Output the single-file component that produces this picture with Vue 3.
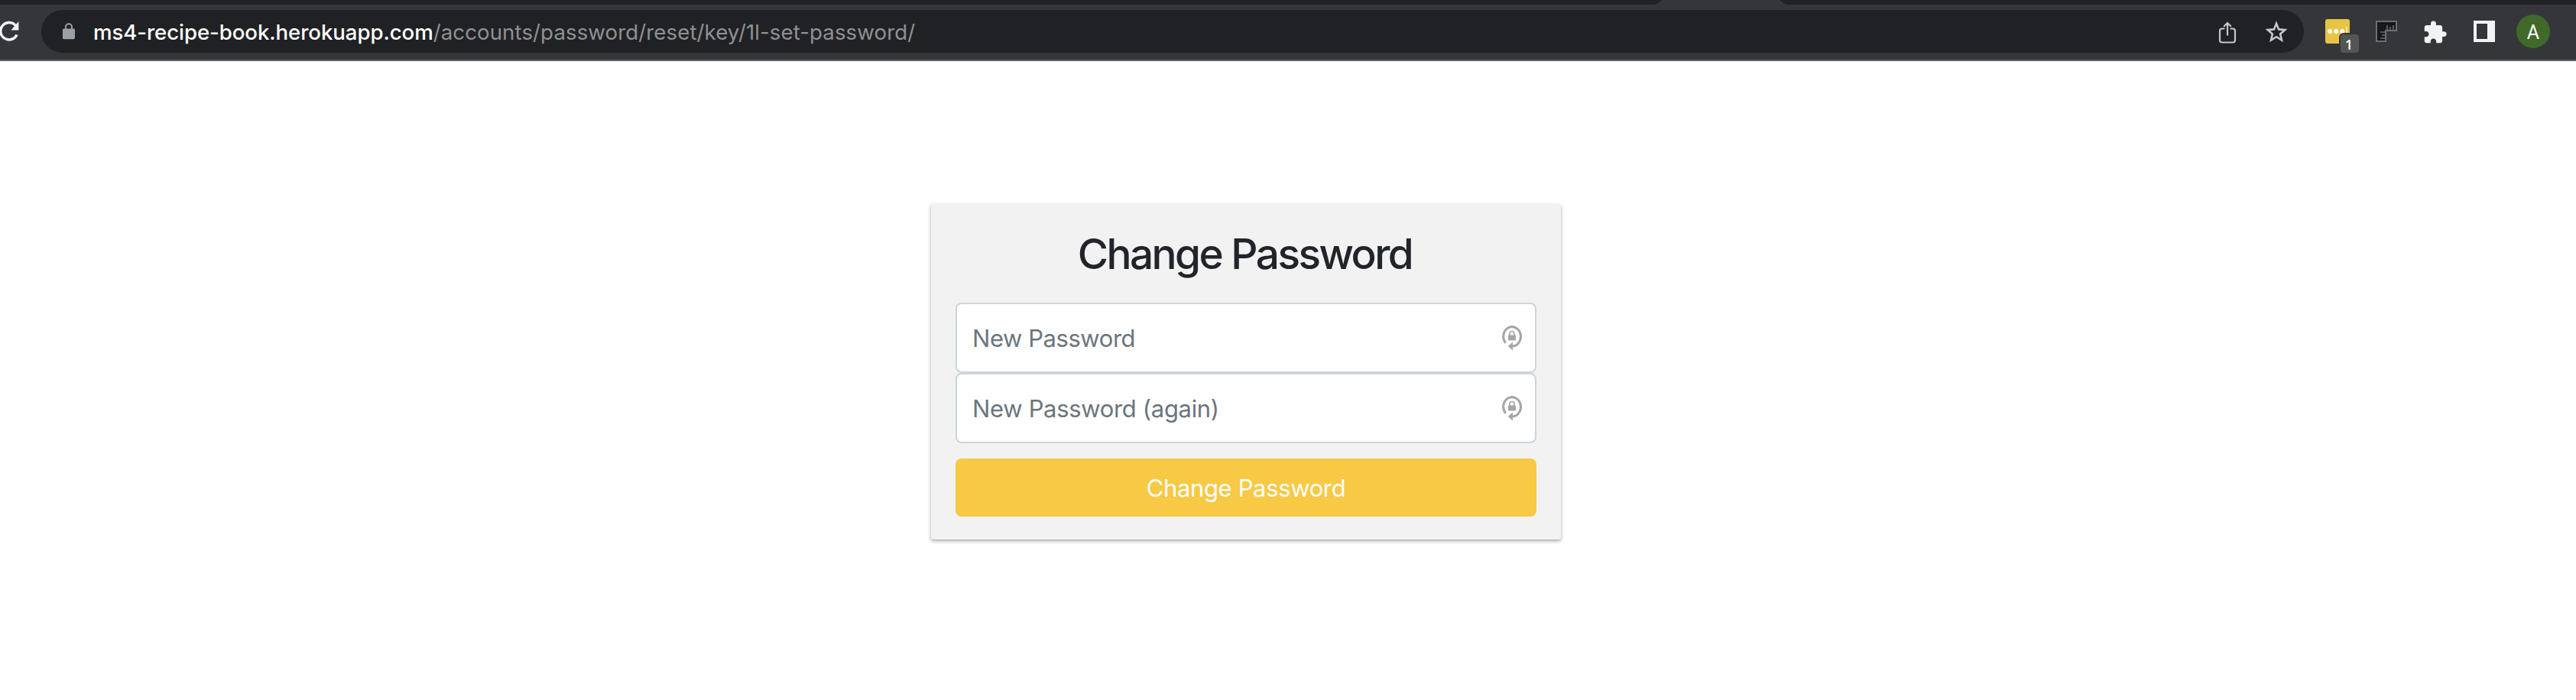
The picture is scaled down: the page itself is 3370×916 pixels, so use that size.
<script setup>
import { ref } from 'vue'

const host = 'ms4-recipe-book.herokuapp.com'
const path = '/accounts/password/reset/key/1l-set-password/'

const fields = ref([
  { id: 'password1', placeholder: 'New Password', value: '' },
  { id: 'password2', placeholder: 'New Password (again)', value: '' },
])
</script>

<template>
  <div class="window">
    <div class="tabstrip">
      <svg width="3370" height="6" viewBox="0 0 3370 6">
        <path d="M2164 6C2168 5 2171 3 2174 0H2328C2331 3 2334 5 2338 6Z" fill="#35363a" />
      </svg>
    </div>
    <header class="toolbar">
      <svg class="reload" width="40" height="40" viewBox="0 0 40 40">
        <path d="M28.7 12.8A11.2 11.2 0 1 0 30 24.5" fill="none" stroke="#f1f3f4" stroke-width="3.4" />
        <path d="M32.4 7V18.5H22.5Z" fill="#f1f3f4" />
      </svg>
      <div class="omnibox">
        <svg class="lock" width="16" height="22" viewBox="0 0 16 22">
          <path d="M4 9V5.2a4 4 0 0 1 8 0V9" fill="none" stroke="#9aa0a6" stroke-width="2" />
          <rect y="7.5" width="16" height="13.7" rx="1.6" fill="#9aa0a6" />
        </svg>
        <div class="url"><span class="host">{{ host }}</span><span class="path">{{ path }}</span></div>
        <svg class="share" width="24" height="34" viewBox="0 -4 24 34">
          <g fill="none" stroke="#c4c5c7" stroke-width="2.2">
            <path d="M8.500 9.500H5A3 3 0 0 0 2 12.500V24.500A3 3 0 0 0 5 27.500H19A3 3 0 0 0 22 24.500V12.500A3 3 0 0 0 19 9.500H15.500" />
            <path d="M12 18.500V2.500M7.200 6.700L12 2L16.800 6.700" />
          </g>
        </svg>
        <svg class="star" width="30" height="32" viewBox="0 -2 30 32">
          <path d="M15 3.800L18.100 11.400L26.300 12.100L20.100 17.500L22 25.500L15 21.200L8 25.500L9.900 17.500L3.700 12.100L11.900 11.400Z" fill="none" stroke="#c4c5c7" stroke-width="2.600" />
        </svg>
      </div>
      <div class="ext">
        <svg width="32" height="32" viewBox="0 0 32 32">
          <rect width="32" height="32" rx="3" fill="#e8c445" />
          <g fill="#fff">
            <circle cx="6.2" cy="16" r="3" />
            <circle cx="14.2" cy="16" r="3" />
            <circle cx="22.2" cy="16" r="3" />
            <rect x="27" y="10" width="1.8" height="12" fill="#f7e8b0" />
          </g>
        </svg>
        <span class="badge">1</span>
      </div>
      <svg class="ruler" width="28" height="28" viewBox="0 0 28 28">
        <path d="M1 1H27V13H13V27H1Z" fill="#17181a" stroke="#6d6e70" stroke-width="2" />
        <path d="M15 12V6M19 12V8M23 12V6M12 15H6M12 19H8M12 23H6" stroke="#6d6e70" stroke-width="1.6" />
      </svg>
      <svg class="puzzle" width="33" height="35" viewBox="0 -1.500 24 25.500">
        <path d="M20.500 11H19V7c0-1.100-.9-2-2-2h-4V3.500a2.500 2.500 0 0 0-5 0V5H4c-1.100 0-2 .9-2 2v3.800h1.500c1.500 0 2.700 1.200 2.700 2.700S5 16.200 3.500 16.200H2V20c0 1.100.9 2 2 2h3.800v-1.500c0-1.500 1.200-2.700 2.700-2.700s2.700 1.200 2.700 2.700V22H17c1.100 0 2-.9 2-2v-4h1.500a2.500 2.500 0 0 0 0-5z" fill="#f1f3f4" />
      </svg>
      <svg class="panel" width="28" height="28" viewBox="0 0 28 28">
        <path d="M0 0H28V28H0ZM4 4V24H18V4Z" fill="#f1f3f4" fill-rule="evenodd" />
      </svg>
      <div class="avatar">A</div>
    </header>

    <main class="page">
      <form class="card" @submit.prevent>
        <h1>Change Password</h1>
        <div v-for="f in fields" :key="f.id" class="field">
          <input v-model="f.value" type="password" :placeholder="f.placeholder" :class="f.id" />
          <svg width="26" height="34" viewBox="0 0 26 34">
            <path d="M4.600 23.800A11.400 12.700 0 1 1 14 28" fill="none" stroke="#a6a6a6" stroke-width="3.100" />
            <path d="M7.800 28L14 22.500V33.500Z" fill="#a6a6a6" />
            <rect x="8" y="13.500" width="10" height="7" rx="1" fill="#a6a6a6" />
            <path d="M10 14V11.500a3 3 0 0 1 6 0V14" fill="none" stroke="#a6a6a6" stroke-width="1.700" />
          </svg>
        </div>
        <button type="submit">Change Password</button>
      </form>
    </main>
  </div>
</template>

<style>
body { background: #fff; }
</style>

<style scoped>
.window {
  width: 3370px;
  height: 916px;
  overflow: hidden;
  background: #fff;
  font-family: Inter, "Open Sans", sans-serif;
}
svg { display: block; flex: none; }
.tabstrip { height: 6px; background: #202124; }
.toolbar {
  display: flex;
  align-items: center;
  box-sizing: border-box;
  height: 74px;
  padding-bottom: 2px;
  border-bottom: 2px solid #5f6063;
  background: #35363a;
}
.reload { margin-left: -8px; }
.omnibox {
  display: flex;
  align-items: center;
  box-sizing: border-box;
  width: 2960px;
  height: 56px;
  margin-left: 22px;
  padding: 0 21px 0 28px;
  border-radius: 28px;
  background: #202124;
}
.url {
  flex: 1;
  margin-left: 24px;
  padding-top: 1px;
  font-size: 27.7px;
  line-height: 36px;
  white-space: nowrap;
}
.host { color: #fff; font-weight: 500; letter-spacing: -0.12px; }
.path { color: #8f9092; letter-spacing: 0.06px; }
.share { margin-right: 37px; }
.ext { position: relative; margin-left: 28px; }
.badge {
  position: absolute;
  left: 20px;
  top: 20px;
  width: 24px;
  height: 24px;
  border-radius: 4px;
  background: #555;
  box-shadow: 0 0 0 2px #35363a;
  color: #fff;
  font: 600 18px/27px "Open Sans", sans-serif;
  text-indent: -2px;
  text-align: center;
}
.ruler { margin-left: 34px; }
.puzzle { margin-left: 33px; }
.panel { margin-left: 34px; }
.avatar {
  width: 44px;
  height: 44px;
  margin-left: 28px;
  border-radius: 50%;
  background: #41692a;
  color: #fff;
  font: 400 25px/47px Roboto, sans-serif;
  text-align: center;
}
.page { display: flex; padding: 187px 0 0 1218px; }
.card {
  box-sizing: border-box;
  width: 824px;
  height: 439px;
  padding: 32px 32px 0;
  border-radius: 2px;
  background: #f2f2f2;
  box-shadow: 0 2px 5px rgba(0, 0, 0, 0.32), 0 1px 1px rgba(0, 0, 0, 0.1);
}
h1 {
  margin: 0 0 30px;
  padding-right: 3px;
  color: #212529;
  font-size: 55px;
  font-weight: 450;
  line-height: 67px;
  letter-spacing: -2.6px;
  text-align: center;
}
.field {
  display: flex;
  align-items: center;
  box-sizing: border-box;
  height: 92px;
  padding: 0 17px 0 20px;
  border: 2px solid #ced4da;
  border-radius: 8px;
  background: #fff;
}
input {
  flex: 1;
  min-width: 0;
  height: 60px;
  padding: 0;
  border: 0;
  outline: 0;
  background: none;
  font-family: inherit;
  font-size: 31px;
  letter-spacing: -0.44px;
}
input.password2 { letter-spacing: -0.33px; }
input::placeholder { color: #6c757d; opacity: 1; }
button {
  display: block;
  width: 100%;
  height: 76px;
  margin-top: 20px;
  padding: 0;
  border: 0;
  border-radius: 8px;
  background: #f7c945;
  color: #fff;
  font-family: inherit;
  font-size: 31px;
  letter-spacing: -0.36px;
}
</style>
